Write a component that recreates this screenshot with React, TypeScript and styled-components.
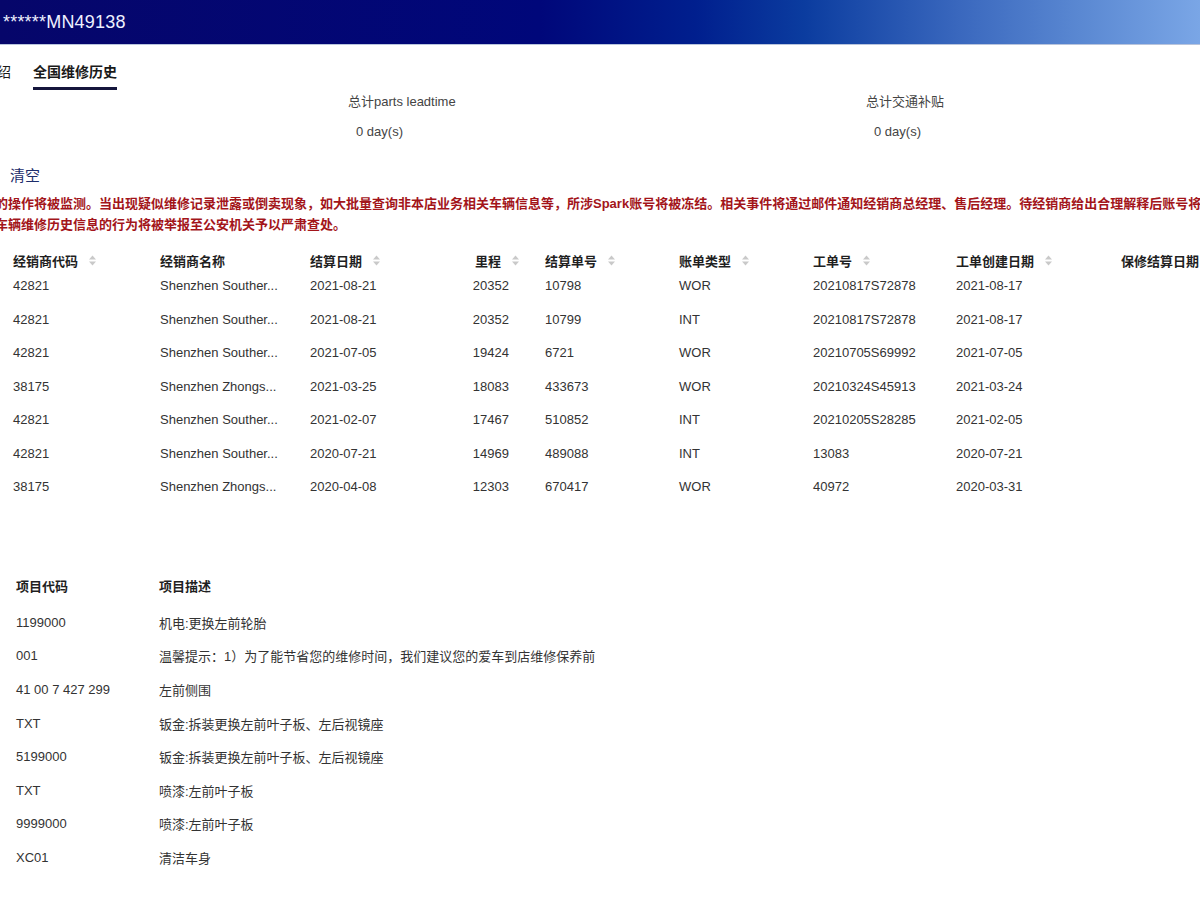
import React from "react";
import styled, { createGlobalStyle } from "styled-components";

const GlobalStyle = createGlobalStyle`
  html, body {
    margin: 0;
    padding: 0;
    background: #fff;
  }
  body {
    font-family: "Liberation Sans", "Noto Sans CJK SC", sans-serif;
    color: #333;
    overflow: hidden;
  }
`;

const Screen = styled.div`
  width: 1200px;
  height: 900px;
  overflow: hidden;
`;

const TopBar = styled.header`
  height: 44px;
  display: flex;
  align-items: center;
  background: linear-gradient(
    90deg,
    #06066a 0%,
    #00077a 45%,
    #001f8e 58%,
    #0b3c9f 67%,
    #3a68be 80%,
    #5a88d2 90%,
    #7aa6e6 100%
  );
  border-bottom: 1px solid #b8c4dc;
`;

const Vin = styled.div`
  margin-left: 3px;
  font-size: 18px;
  letter-spacing: 0.2px;
  color: #eef0ff;
  white-space: nowrap;
`;

const TabBar = styled.nav`
  display: flex;
  align-items: flex-end;
  gap: 22px;
  padding-top: 17px;
  margin-left: -45px;
`;

const Tab = styled.div<{ $active?: boolean }>`
  font-size: 14px;
  line-height: 20px;
  padding-bottom: 5px;
  color: #1a1a1a;
  white-space: nowrap;
  font-weight: ${(p) => (p.$active ? 700 : 400)};
  border-bottom: 3px solid ${(p) => (p.$active ? "#15163c" : "transparent")};
`;

const Summary = styled.section`
  display: grid;
  grid-template-columns: 518px 1fr;
  padding-left: 348px;
  margin-top: 3px;
`;

const SummaryItem = styled.div`
  display: flex;
  flex-direction: column;
  gap: 12px;
  font-size: 13px;
  line-height: 18px;
  color: #444;
`;

const SummaryValue = styled.div`
  padding-left: 8px;
`;

const ClearButton = styled.button`
  display: block;
  margin: 25px 0 0 10px;
  padding: 0;
  border: none;
  background: none;
  font-family: inherit;
  font-size: 15px;
  line-height: 20px;
  color: #1d2d6b;
  cursor: pointer;
`;

const Warning = styled.div`
  margin-top: 7px;
  font-size: 13px;
  line-height: 21px;
  font-weight: 700;
  color: #a3151a;
`;

const WarningLine = styled.div<{ $shift: number }>`
  white-space: nowrap;
  margin-left: ${(p) => p.$shift}px;
`;

const cols = "147px 150px 150px 85px 134px 134px 143px 165px 1fr";

const HeadRow = styled.div`
  display: grid;
  grid-template-columns: ${cols};
  height: 26px;
  align-items: center;
  margin-top: 12px;
`;

const HeadCell = styled.div<{ $right?: boolean }>`
  display: flex;
  align-items: center;
  justify-content: ${(p) => (p.$right ? "flex-end" : "flex-start")};
  gap: 11px;
  padding: 0 13px;
  font-size: 13px;
  font-weight: 700;
  color: #1f1f1f;
  white-space: nowrap;
`;

const BodyRow = styled.div`
  display: grid;
  grid-template-columns: ${cols};
  height: 33.5px;
  box-sizing: border-box;
  padding-top: 5px;
  align-items: start;
`;

const Cell = styled.div<{ $right?: boolean }>`
  padding: 0 ${(p) => (p.$right ? "23px" : "13px")} 0 13px;
  text-align: ${(p) => (p.$right ? "right" : "left")};
  font-size: 13px;
  line-height: 16px;
  color: #333;
  white-space: nowrap;
`;

const ItemTable = styled.section`
  margin-top: 63px;
`;

const ItemHead = styled.div`
  display: grid;
  grid-template-columns: 143px 1fr;
  height: 35px;
  box-sizing: border-box;
  padding-top: 8px;
  align-items: start;
`;

const ItemRow = styled.div`
  display: grid;
  grid-template-columns: 143px 1fr;
  height: 33.6px;
  align-items: center;
`;

const ItemHeadCell = styled.div`
  padding: 0 16px;
  font-size: 13px;
  line-height: 16px;
  font-weight: 700;
  color: #1f1f1f;
`;

const ItemCell = styled.div`
  padding: 0 16px;
  font-size: 13px;
  color: #333;
  white-space: nowrap;
`;

function Sorter() {
  return (
    <svg width="7" height="11" viewBox="0 0 7 11">
      <path d="M0 4.5 L3.5 0.5 L7 4.5 Z" fill="#c9c9c9" />
      <path d="M0 6.5 L3.5 10.5 L7 6.5 Z" fill="#c9c9c9" />
    </svg>
  );
}

const heads = [
  { label: "经销商代码", sort: true },
  { label: "经销商名称", sort: false },
  { label: "结算日期", sort: true },
  { label: "里程", sort: true, right: true },
  { label: "结算单号", sort: true },
  { label: "账单类型", sort: true },
  { label: "工单号", sort: true },
  { label: "工单创建日期", sort: true },
  { label: "保修结算日期", sort: true },
];

const rows = [
  ["42821", "Shenzhen Souther...", "2021-08-21", "20352", "10798", "WOR", "20210817S72878", "2021-08-17", ""],
  ["42821", "Shenzhen Souther...", "2021-08-21", "20352", "10799", "INT", "20210817S72878", "2021-08-17", ""],
  ["42821", "Shenzhen Souther...", "2021-07-05", "19424", "6721", "WOR", "20210705S69992", "2021-07-05", ""],
  ["38175", "Shenzhen Zhongs...", "2021-03-25", "18083", "433673", "WOR", "20210324S45913", "2021-03-24", ""],
  ["42821", "Shenzhen Souther...", "2021-02-07", "17467", "510852", "INT", "20210205S28285", "2021-02-05", ""],
  ["42821", "Shenzhen Souther...", "2020-07-21", "14969", "489088", "INT", "13083", "2020-07-21", ""],
  ["38175", "Shenzhen Zhongs...", "2020-04-08", "12303", "670417", "WOR", "40972", "2020-03-31", ""],
];

const items = [
  ["1199000", "机电:更换左前轮胎"],
  ["001", "温馨提示：1）为了能节省您的维修时间，我们建议您的爱车到店维修保养前"],
  ["41 00 7 427 299", "左前侧围"],
  ["TXT", "钣金:拆装更换左前叶子板、左后视镜座"],
  ["5199000", "钣金:拆装更换左前叶子板、左后视镜座"],
  ["TXT", "喷漆:左前叶子板"],
  ["9999000", "喷漆:左前叶子板"],
  ["XC01", "清洁车身"],
];

export default function App() {
  return (
    <Screen>
      <GlobalStyle />
      <TopBar>
        <Vin>******MN49138</Vin>
      </TopBar>

      <TabBar>
        <Tab>车辆介绍</Tab>
        <Tab $active>全国维修历史</Tab>
      </TabBar>

      <Summary>
        <SummaryItem>
          <div>总计parts leadtime</div>
          <SummaryValue>0 day(s)</SummaryValue>
        </SummaryItem>
        <SummaryItem>
          <div>总计交通补贴</div>
          <SummaryValue>0 day(s)</SummaryValue>
        </SummaryItem>
      </Summary>

      <ClearButton>清空</ClearButton>

      <Warning>
        <WarningLine $shift={-18}>
          您的操作将被监测。当出现疑似维修记录泄露或倒卖现象，如大批量查询非本店业务相关车辆信息等，所涉Spark账号将被冻结。相关事件将通过邮件通知经销商总经理、售后经理。待经销商给出合理解释后账号将被解冻。
        </WarningLine>
        <WarningLine $shift={-31}>
          倒卖车辆维修历史信息的行为将被举报至公安机关予以严肃查处。
        </WarningLine>
      </Warning>

      <HeadRow>
        {heads.map((h) => (
          <HeadCell key={h.label} $right={h.right}>
            <span>{h.label}</span>
            {h.sort && <Sorter />}
          </HeadCell>
        ))}
      </HeadRow>
      {rows.map((r, i) => (
        <BodyRow key={i}>
          {r.map((v, j) => (
            <Cell key={j} $right={j === 3}>
              {v}
            </Cell>
          ))}
        </BodyRow>
      ))}

      <ItemTable>
        <ItemHead>
          <ItemHeadCell>项目代码</ItemHeadCell>
          <ItemHeadCell>项目描述</ItemHeadCell>
        </ItemHead>
        {items.map((it, i) => (
          <ItemRow key={i}>
            <ItemCell>{it[0]}</ItemCell>
            <ItemCell>{it[1]}</ItemCell>
          </ItemRow>
        ))}
      </ItemTable>
    </Screen>
  );
}
